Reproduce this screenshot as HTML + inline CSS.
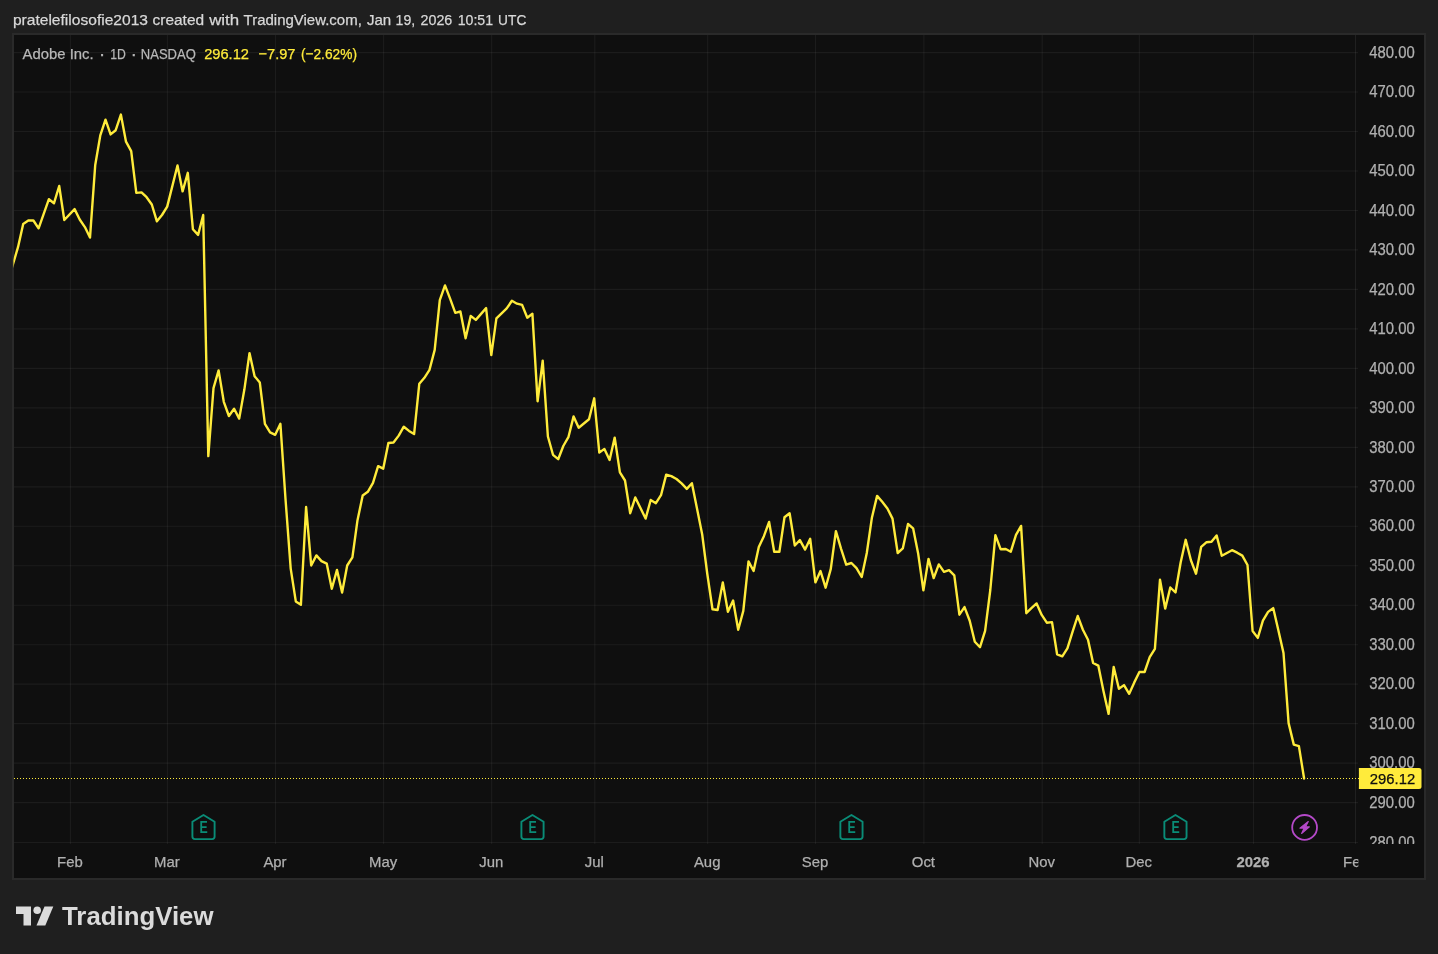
<!DOCTYPE html>
<html><head><meta charset="utf-8"><title>ADBE chart</title>
<style>
html,body{margin:0;padding:0;background:#1f1f1f;}
body{width:1438px;height:954px;overflow:hidden;position:relative;font-family:"Liberation Sans",sans-serif;}
#box{position:absolute;left:12px;top:33px;width:1410px;height:843px;border:2px solid #2a2a2a;background:#0f0f0f;}
svg{position:absolute;left:0;top:0;transform:translateZ(0);will-change:transform;}
svg text{font-family:"Liberation Sans",sans-serif;}
</style></head><body>
<div id="box"></div>
<svg width="1438" height="954" viewBox="0 0 1438 954">
<defs>
<clipPath id="pane"><rect x="13.4" y="35" width="1342.6" height="809"/></clipPath>
<clipPath id="paxis"><rect x="1356" y="35" width="68" height="809"/></clipPath>
<clipPath id="taxis"><rect x="14" y="844" width="1344.3" height="34"/></clipPath>
</defs>

<g stroke="rgba(255,255,255,0.055)" stroke-width="1.15" fill="none">
<line x1="14" y1="52.6" x2="1358" y2="52.6"/>
<line x1="14" y1="92.0" x2="1358" y2="92.0"/>
<line x1="14" y1="131.5" x2="1358" y2="131.5"/>
<line x1="14" y1="171.0" x2="1358" y2="171.0"/>
<line x1="14" y1="210.5" x2="1358" y2="210.5"/>
<line x1="14" y1="249.9" x2="1358" y2="249.9"/>
<line x1="14" y1="289.4" x2="1358" y2="289.4"/>
<line x1="14" y1="328.9" x2="1358" y2="328.9"/>
<line x1="14" y1="368.4" x2="1358" y2="368.4"/>
<line x1="14" y1="407.8" x2="1358" y2="407.8"/>
<line x1="14" y1="447.3" x2="1358" y2="447.3"/>
<line x1="14" y1="486.8" x2="1358" y2="486.8"/>
<line x1="14" y1="526.2" x2="1358" y2="526.2"/>
<line x1="14" y1="565.7" x2="1358" y2="565.7"/>
<line x1="14" y1="605.2" x2="1358" y2="605.2"/>
<line x1="14" y1="644.7" x2="1358" y2="644.7"/>
<line x1="14" y1="684.1" x2="1358" y2="684.1"/>
<line x1="14" y1="723.6" x2="1358" y2="723.6"/>
<line x1="14" y1="763.1" x2="1358" y2="763.1"/>
<line x1="14" y1="802.6" x2="1358" y2="802.6"/>
<line x1="14" y1="842.5" x2="1358" y2="842.5"/>
<line x1="70.4" y1="35" x2="70.4" y2="844"/>
<line x1="167.4" y1="35" x2="167.4" y2="844"/>
<line x1="275.5" y1="35" x2="275.5" y2="844"/>
<line x1="383.6" y1="35" x2="383.6" y2="844"/>
<line x1="491.7" y1="35" x2="491.7" y2="844"/>
<line x1="594.8" y1="35" x2="594.8" y2="844"/>
<line x1="707.7" y1="35" x2="707.7" y2="844"/>
<line x1="815.5" y1="35" x2="815.5" y2="844"/>
<line x1="923.9" y1="35" x2="923.9" y2="844"/>
<line x1="1042.2" y1="35" x2="1042.2" y2="844"/>
<line x1="1139.3" y1="35" x2="1139.3" y2="844"/>
<line x1="1253.5" y1="35" x2="1253.5" y2="844"/>
<line x1="1355.5" y1="35" x2="1355.5" y2="844" stroke="rgba(255,255,255,0.075)"/>
</g>
<g clip-path="url(#paxis)" font-size="15.8" fill="#b0b0b0" stroke="#b0b0b0" stroke-width="0.25">
<text x="1369.3" y="57.8" textLength="45.4" lengthAdjust="spacingAndGlyphs">480.00</text>
<text x="1369.3" y="97.2" textLength="45.4" lengthAdjust="spacingAndGlyphs">470.00</text>
<text x="1369.3" y="136.7" textLength="45.4" lengthAdjust="spacingAndGlyphs">460.00</text>
<text x="1369.3" y="176.2" textLength="45.4" lengthAdjust="spacingAndGlyphs">450.00</text>
<text x="1369.3" y="215.7" textLength="45.4" lengthAdjust="spacingAndGlyphs">440.00</text>
<text x="1369.3" y="255.1" textLength="45.4" lengthAdjust="spacingAndGlyphs">430.00</text>
<text x="1369.3" y="294.6" textLength="45.4" lengthAdjust="spacingAndGlyphs">420.00</text>
<text x="1369.3" y="334.1" textLength="45.4" lengthAdjust="spacingAndGlyphs">410.00</text>
<text x="1369.3" y="373.6" textLength="45.4" lengthAdjust="spacingAndGlyphs">400.00</text>
<text x="1369.3" y="413.0" textLength="45.4" lengthAdjust="spacingAndGlyphs">390.00</text>
<text x="1369.3" y="452.5" textLength="45.4" lengthAdjust="spacingAndGlyphs">380.00</text>
<text x="1369.3" y="492.0" textLength="45.4" lengthAdjust="spacingAndGlyphs">370.00</text>
<text x="1369.3" y="531.4" textLength="45.4" lengthAdjust="spacingAndGlyphs">360.00</text>
<text x="1369.3" y="570.9" textLength="45.4" lengthAdjust="spacingAndGlyphs">350.00</text>
<text x="1369.3" y="610.4" textLength="45.4" lengthAdjust="spacingAndGlyphs">340.00</text>
<text x="1369.3" y="649.9" textLength="45.4" lengthAdjust="spacingAndGlyphs">330.00</text>
<text x="1369.3" y="689.3" textLength="45.4" lengthAdjust="spacingAndGlyphs">320.00</text>
<text x="1369.3" y="728.8" textLength="45.4" lengthAdjust="spacingAndGlyphs">310.00</text>
<text x="1369.3" y="768.3" textLength="45.4" lengthAdjust="spacingAndGlyphs">300.00</text>
<text x="1369.3" y="807.8" textLength="45.4" lengthAdjust="spacingAndGlyphs">290.00</text>
<text x="1369.3" y="847.7" textLength="45.4" lengthAdjust="spacingAndGlyphs">280.00</text>
</g>
<g clip-path="url(#taxis)" font-size="14.9" fill="#b0b0b0" stroke="#b0b0b0" stroke-width="0.25" text-anchor="middle">
<text x="69.9" y="866.6">Feb</text>
<text x="166.9" y="866.6">Mar</text>
<text x="275.0" y="866.6">Apr</text>
<text x="383.1" y="866.6">May</text>
<text x="491.2" y="866.6">Jun</text>
<text x="594.3" y="866.6">Jul</text>
<text x="707.2" y="866.6">Aug</text>
<text x="815.0" y="866.6">Sep</text>
<text x="923.4" y="866.6">Oct</text>
<text x="1041.7" y="866.6">Nov</text>
<text x="1138.8" y="866.6">Dec</text>
<text x="1253.0" y="866.6" font-weight="bold">2026</text>
<text x="1355.9" y="866.6">Feb</text>
</g>
<line x1="14" y1="778.5" x2="1359" y2="778.5" stroke="#ffeb3b" stroke-width="1" stroke-dasharray="1 2"/>
<g clip-path="url(#pane)"><polyline points="7.7,281.0 12.9,264.5 18.0,247.2 23.2,223.9 28.3,220.5 33.4,220.5 38.6,228.3 48.9,199.2 54.0,203.2 59.2,186.0 64.3,220.0 74.6,209.1 79.7,219.5 84.9,227.1 90.0,237.6 95.2,165.3 100.3,135.4 105.5,119.7 110.6,134.4 115.7,130.2 120.9,114.6 126.0,141.7 131.2,151.1 136.3,192.9 141.5,192.4 146.6,197.2 151.8,204.5 156.9,221.3 162.0,215.0 167.2,206.6 177.5,165.5 182.6,191.4 187.8,172.8 192.9,229.2 198.1,234.9 203.2,215.0 208.3,456.1 213.5,388.2 218.6,370.4 223.8,401.8 228.9,416.0 234.1,408.7 239.2,418.6 244.4,389.3 249.5,353.1 254.6,376.2 259.8,382.5 264.9,423.8 270.1,432.3 275.2,434.8 280.4,423.8 285.5,499.0 290.7,568.6 295.8,601.4 300.9,604.8 306.1,507.0 311.2,565.5 316.4,555.4 321.5,561.1 326.7,563.6 331.8,588.8 337.0,569.9 342.1,592.6 347.2,565.5 352.4,557.3 357.5,520.2 362.7,495.5 367.8,491.8 373.0,482.8 378.1,466.2 383.2,468.7 388.4,443.0 393.5,442.5 398.7,435.6 403.8,426.7 409.0,430.9 414.1,434.1 419.3,383.7 424.4,377.8 429.5,369.8 434.7,349.9 439.8,300.1 445.0,285.4 450.1,298.6 455.3,312.8 460.4,311.5 465.6,338.2 470.7,315.9 475.8,319.9 486.1,308.1 491.3,355.1 496.4,318.4 501.6,313.3 506.7,308.4 511.9,300.8 517.0,303.7 522.1,304.9 527.3,317.7 532.4,313.7 537.6,401.3 542.7,360.7 547.9,436.5 553.0,454.8 558.2,459.2 563.3,446.0 568.4,437.2 573.6,416.4 578.7,427.7 589.0,419.3 594.2,398.3 599.3,452.6 604.4,448.9 609.6,459.9 614.7,437.6 619.9,472.4 625.0,480.5 630.2,513.2 635.3,497.4 645.6,518.6 650.7,500.0 655.9,503.2 661.0,495.2 666.2,474.6 671.3,476.1 676.5,479.0 681.6,483.4 686.8,488.9 691.9,483.2 697.0,508.6 702.2,534.5 707.3,574.0 712.5,609.2 717.6,610.0 722.8,582.4 727.9,611.7 733.1,600.5 738.2,629.7 743.3,610.9 748.5,561.4 753.6,571.0 758.8,547.1 763.9,536.2 769.1,522.0 774.2,551.8 779.4,551.8 784.5,517.3 789.6,513.2 794.8,545.5 799.9,540.1 805.1,549.6 810.2,538.8 815.4,582.4 820.5,571.0 825.6,587.7 830.8,568.9 835.9,531.2 841.1,548.8 846.2,564.7 851.4,563.0 856.5,568.1 861.7,577.0 866.8,553.0 871.9,517.7 877.1,495.9 882.2,501.8 887.4,508.5 892.5,518.6 897.7,553.0 902.8,548.4 908.0,524.0 913.1,528.3 918.2,553.8 923.4,590.4 928.5,558.9 933.7,578.1 938.8,564.4 944.0,571.9 949.1,570.2 954.3,575.3 959.4,614.7 964.5,607.1 969.7,620.8 974.8,641.7 980.0,647.2 985.1,630.9 990.3,590.0 995.4,535.1 1000.6,549.2 1005.7,549.0 1010.8,551.7 1016.0,534.9 1021.1,525.9 1026.3,613.2 1031.4,608.1 1036.6,603.4 1041.7,614.9 1046.8,622.7 1052.0,622.1 1057.1,654.3 1062.3,656.3 1067.4,648.4 1072.6,631.6 1077.7,616.0 1082.9,629.7 1088.0,639.8 1093.1,663.0 1098.3,665.6 1103.4,690.8 1108.6,713.9 1113.7,667.0 1118.9,688.8 1124.0,685.1 1129.2,693.8 1134.3,682.4 1139.4,672.0 1144.6,672.0 1149.7,657.2 1154.9,648.8 1160.0,579.6 1165.2,608.6 1170.3,587.5 1175.5,592.5 1180.6,562.8 1185.7,539.8 1190.9,560.3 1196.0,573.7 1201.2,546.8 1206.3,542.3 1211.5,541.8 1216.6,535.4 1221.8,555.7 1226.9,553.0 1232.0,550.2 1237.2,552.7 1242.3,555.6 1247.5,565.0 1252.6,631.0 1257.8,637.9 1262.9,620.6 1268.1,611.9 1273.2,608.1 1278.3,629.9 1283.5,653.0 1288.6,723.1 1293.8,744.6 1298.9,746.1 1304.1,778.5" fill="none" stroke="#ffeb3b" stroke-width="2.4" stroke-linejoin="round" stroke-linecap="round"/></g>
<text y="24.6" font-size="15.3" fill="#d8d8d8" stroke="#d8d8d8" stroke-width="0.25"><tspan x="12.9" textLength="135.1" lengthAdjust="spacingAndGlyphs">pratelefilosofie2013</tspan> <tspan x="152.5" textLength="51.6" lengthAdjust="spacingAndGlyphs">created</tspan> <tspan x="209.2" textLength="30.0" lengthAdjust="spacingAndGlyphs">with</tspan> <tspan x="243.6" textLength="118.2" lengthAdjust="spacingAndGlyphs">TradingView.com,</tspan> <tspan x="366.9" textLength="24.3" lengthAdjust="spacingAndGlyphs">Jan</tspan> <tspan x="395.6" textLength="19.6" lengthAdjust="spacingAndGlyphs">19,</tspan> <tspan x="420.5" textLength="31.8" lengthAdjust="spacingAndGlyphs">2026</tspan> <tspan x="457.7" textLength="35.4" lengthAdjust="spacingAndGlyphs">10:51</tspan> <tspan x="498.1" textLength="28.2" lengthAdjust="spacingAndGlyphs">UTC</tspan></text>
<text y="59" font-size="15.1" fill="#b8b8b8" stroke="#b8b8b8" stroke-width="0.25"><tspan x="22.6" textLength="71" lengthAdjust="spacingAndGlyphs">Adobe Inc.</tspan> <tspan x="100.3" font-weight="bold" font-size="13">·</tspan> <tspan x="110.3" textLength="15.6" lengthAdjust="spacingAndGlyphs">1D</tspan> <tspan x="132" font-weight="bold" font-size="13">·</tspan> <tspan x="140.8" textLength="55" lengthAdjust="spacingAndGlyphs">NASDAQ</tspan></text>
<text y="59" font-size="15.1" fill="#ffeb3b" stroke="#ffeb3b" stroke-width="0.25"><tspan x="204.2" textLength="44.8" lengthAdjust="spacingAndGlyphs">296.12</tspan> <tspan x="258.6" textLength="36.9" lengthAdjust="spacingAndGlyphs">−7.97</tspan> <tspan x="300.9" textLength="56.1" lengthAdjust="spacingAndGlyphs">(−2.62%)</tspan></text>
<path d="M1358.9,767.9 H1419 Q1421.5,767.9 1421.5,770.4 V786.5 Q1421.5,789 1419,789 H1358.9 Z" fill="#ffeb3b"/>
<text x="1369.8" y="784.1" font-size="15.5" fill="#0f0f0f" stroke="#0f0f0f" stroke-width="0.25" textLength="45.4" lengthAdjust="spacingAndGlyphs">296.12</text>
<g transform="translate(203.5,827)"><path d="M-11.1,-5.2 L0,-12 L11.1,-5.2 L11.1,9.6 Q11.1,12.1 8.6,12.1 L-8.6,12.1 Q-11.1,12.1 -11.1,9.6 Z" fill="none" stroke="#0a8c77" stroke-width="1.9" stroke-linejoin="round"/><text x="0" y="6" font-size="16.2" font-weight="bold" fill="#0a8c77" text-anchor="middle" transform="translate(0.2,0) scale(0.76,1)">E</text></g>
<g transform="translate(532.5,827)"><path d="M-11.1,-5.2 L0,-12 L11.1,-5.2 L11.1,9.6 Q11.1,12.1 8.6,12.1 L-8.6,12.1 Q-11.1,12.1 -11.1,9.6 Z" fill="none" stroke="#0a8c77" stroke-width="1.9" stroke-linejoin="round"/><text x="0" y="6" font-size="16.2" font-weight="bold" fill="#0a8c77" text-anchor="middle" transform="translate(0.2,0) scale(0.76,1)">E</text></g>
<g transform="translate(851.45,827)"><path d="M-11.1,-5.2 L0,-12 L11.1,-5.2 L11.1,9.6 Q11.1,12.1 8.6,12.1 L-8.6,12.1 Q-11.1,12.1 -11.1,9.6 Z" fill="none" stroke="#0a8c77" stroke-width="1.9" stroke-linejoin="round"/><text x="0" y="6" font-size="16.2" font-weight="bold" fill="#0a8c77" text-anchor="middle" transform="translate(0.2,0) scale(0.76,1)">E</text></g>
<g transform="translate(1175.45,827)"><path d="M-11.1,-5.2 L0,-12 L11.1,-5.2 L11.1,9.6 Q11.1,12.1 8.6,12.1 L-8.6,12.1 Q-11.1,12.1 -11.1,9.6 Z" fill="none" stroke="#0a8c77" stroke-width="1.9" stroke-linejoin="round"/><text x="0" y="6" font-size="16.2" font-weight="bold" fill="#0a8c77" text-anchor="middle" transform="translate(0.2,0) scale(0.76,1)">E</text></g>
<g transform="translate(1304.6,827.4)"><circle r="12.4" fill="none" stroke="#b449c8" stroke-width="1.8"/><path d="M3.7,-5.9 L-4.7,0.7 L-0.5,0.7 L-3,6.1 L4.8,-0.5 L0.9,-0.5 Z" fill="#b449c8" stroke="#b449c8" stroke-width="1.1" stroke-linejoin="round"/></g>
<g fill="#dbdbdb"><path d="M16,906.5 H31 V925.5 H23.5 V914 H16 Z"/><circle cx="37.2" cy="910.3" r="3.8"/><path d="M44.5,906.5 H53.3 L45.3,925.5 H36.5 Z"/></g>
<text x="62" y="925.3" font-size="26.4" font-weight="bold" fill="#dbdbdb" textLength="151.5" lengthAdjust="spacingAndGlyphs">TradingView</text>
</svg></body></html>
